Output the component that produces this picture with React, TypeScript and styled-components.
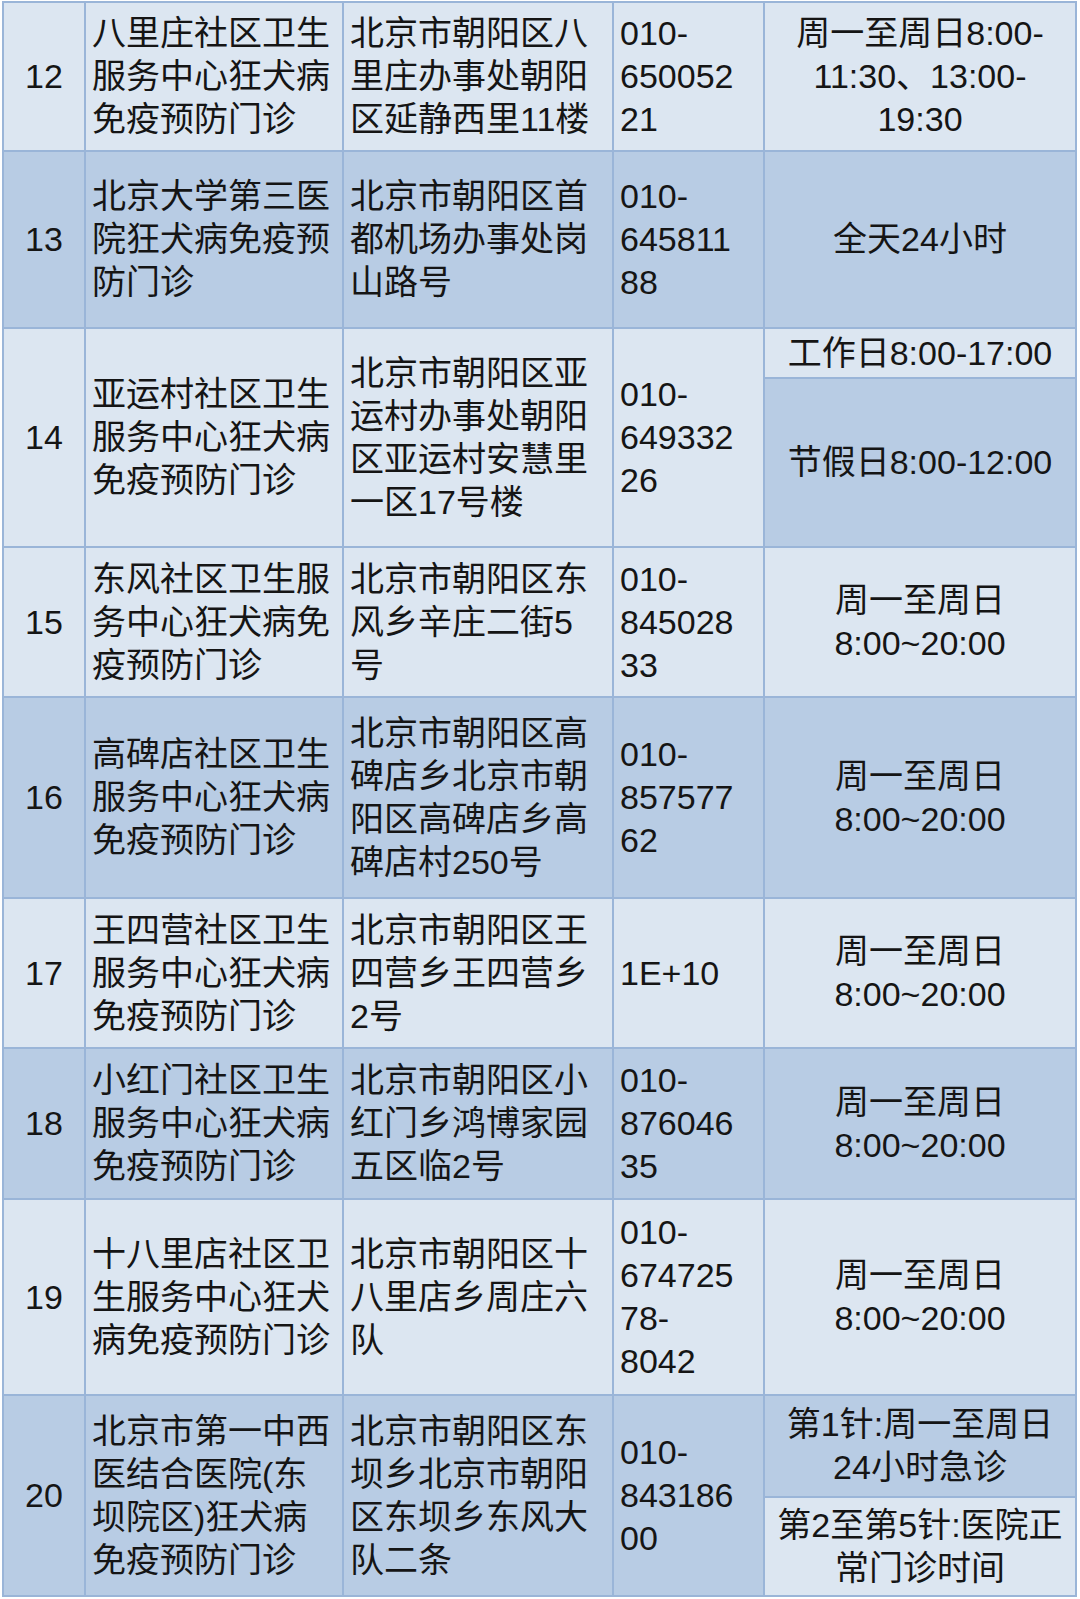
import styled, { createGlobalStyle } from 'styled-components';

const GlobalStyle = createGlobalStyle`
  html, body {
    margin: 0;
    padding: 0;
    background: #ffffff;
  }
  body {
    font-family: "Liberation Sans", "Noto Sans CJK SC", sans-serif;
    color: #151515;
  }
`;

const colors = {
  light: '#dce6f1',
  dark: '#b8cce4',
  line: '#9ab5d8',
};

type Tone = 'light' | 'dark';

interface Slot {
  lines: string[];
  tone: Tone;
  height: number;
}

interface Clinic {
  no: string;
  tone: Tone;
  name: string[];
  address: string[];
  phone: string[];
  hours: Slot[];
}

const clinics: Clinic[] = [
  {
    no: '12',
    tone: 'light',
    name: ['八里庄社区卫生', '服务中心狂犬病', '免疫预防门诊'],
    address: ['北京市朝阳区八', '里庄办事处朝阳', '区延静西里11楼'],
    phone: ['010-', '650052', '21'],
    hours: [{ lines: ['周一至周日8:00-', '11:30、13:00-', '19:30'], tone: 'light', height: 147 }],
  },
  {
    no: '13',
    tone: 'dark',
    name: ['北京大学第三医', '院狂犬病免疫预', '防门诊'],
    address: ['北京市朝阳区首', '都机场办事处岗', '山路号'],
    phone: ['010-', '645811', '88'],
    hours: [{ lines: ['全天24小时'], tone: 'dark', height: 175 }],
  },
  {
    no: '14',
    tone: 'light',
    name: ['亚运村社区卫生', '服务中心狂犬病', '免疫预防门诊'],
    address: ['北京市朝阳区亚', '运村办事处朝阳', '区亚运村安慧里', '一区17号楼'],
    phone: ['010-', '649332', '26'],
    hours: [
      { lines: ['工作日8:00-17:00'], tone: 'light', height: 48 },
      { lines: ['节假日8:00-12:00'], tone: 'dark', height: 167 },
    ],
  },
  {
    no: '15',
    tone: 'light',
    name: ['东风社区卫生服', '务中心狂犬病免', '疫预防门诊'],
    address: ['北京市朝阳区东', '风乡辛庄二街5', '号'],
    phone: ['010-', '845028', '33'],
    hours: [{ lines: ['周一至周日', '8:00~20:00'], tone: 'light', height: 148 }],
  },
  {
    no: '16',
    tone: 'dark',
    name: ['高碑店社区卫生', '服务中心狂犬病', '免疫预防门诊'],
    address: ['北京市朝阳区高', '碑店乡北京市朝', '阳区高碑店乡高', '碑店村250号'],
    phone: ['010-', '857577', '62'],
    hours: [{ lines: ['周一至周日', '8:00~20:00'], tone: 'dark', height: 199 }],
  },
  {
    no: '17',
    tone: 'light',
    name: ['王四营社区卫生', '服务中心狂犬病', '免疫预防门诊'],
    address: ['北京市朝阳区王', '四营乡王四营乡', '2号'],
    phone: ['1E+10'],
    hours: [{ lines: ['周一至周日', '8:00~20:00'], tone: 'light', height: 148 }],
  },
  {
    no: '18',
    tone: 'dark',
    name: ['小红门社区卫生', '服务中心狂犬病', '免疫预防门诊'],
    address: ['北京市朝阳区小', '红门乡鸿博家园', '五区临2号'],
    phone: ['010-', '876046', '35'],
    hours: [{ lines: ['周一至周日', '8:00~20:00'], tone: 'dark', height: 149 }],
  },
  {
    no: '19',
    tone: 'light',
    name: ['十八里店社区卫', '生服务中心狂犬', '病免疫预防门诊'],
    address: ['北京市朝阳区十', '八里店乡周庄六', '队'],
    phone: ['010-', '674725', '78-', '8042'],
    hours: [{ lines: ['周一至周日', '8:00~20:00'], tone: 'light', height: 194 }],
  },
  {
    no: '20',
    tone: 'dark',
    name: ['北京市第一中西', '医结合医院(东', '坝院区)狂犬病', '免疫预防门诊'],
    address: ['北京市朝阳区东', '坝乡北京市朝阳', '区东坝乡东风大', '队二条'],
    phone: ['010-', '843186', '00'],
    hours: [
      { lines: ['第1针:周一至周日', '24小时急诊'], tone: 'dark', height: 100 },
      { lines: ['第2至第5针:医院正', '常门诊时间'], tone: 'light', height: 97 },
    ],
  },
];

const Page = styled.div`
  padding: 1px 0 0 2px;
`;

const Table = styled.div<{ $rows: string }>`
  display: grid;
  width: 1075px;
  grid-template-columns: 80px 256px 268px 149px 310px;
  grid-template-rows: ${(p) => p.$rows};
  gap: 2px;
  padding: 2px;
  box-sizing: border-box;
  background: ${colors.line};
`;

const Cell = styled.div<{ $tone: Tone; $span: number; $align: 'left' | 'center' }>`
  grid-row: span ${(p) => p.$span};
  background: ${(p) => colors[p.$tone]};
  display: flex;
  flex-direction: column;
  justify-content: center;
  align-items: ${(p) => (p.$align === 'center' ? 'center' : 'flex-start')};
  padding: 0 ${(p) => (p.$align === 'center' ? '0' : '6px')};
  overflow: hidden;
  font-size: 34px;
  line-height: 43px;
  text-align: ${(p) => p.$align};
  white-space: nowrap;
`;

const Line = styled.span`
  display: block;
`;

function Lines({ lines }: { lines: string[] }) {
  return (
    <>
      {lines.map((l, i) => (
        <Line key={i}>{l}</Line>
      ))}
    </>
  );
}

export default function App() {
  const rows = clinics.flatMap((c) => c.hours.map((h) => `${h.height}px`)).join(' ');

  return (
    <Page>
      <GlobalStyle />
      <Table $rows={rows}>
        {clinics.map((c) => {
          const span = c.hours.length;
          return [
            <Cell key={`${c.no}-no`} $tone={c.tone} $span={span} $align="center">
              {c.no}
            </Cell>,
            <Cell key={`${c.no}-name`} $tone={c.tone} $span={span} $align="left">
              <Lines lines={c.name} />
            </Cell>,
            <Cell key={`${c.no}-addr`} $tone={c.tone} $span={span} $align="left">
              <Lines lines={c.address} />
            </Cell>,
            <Cell key={`${c.no}-phone`} $tone={c.tone} $span={span} $align="left">
              <Lines lines={c.phone} />
            </Cell>,
            ...c.hours.map((h, i) => (
              <Cell key={`${c.no}-h${i}`} $tone={h.tone} $span={1} $align="center">
                <Lines lines={h.lines} />
              </Cell>
            )),
          ];
        })}
      </Table>
    </Page>
  );
}
